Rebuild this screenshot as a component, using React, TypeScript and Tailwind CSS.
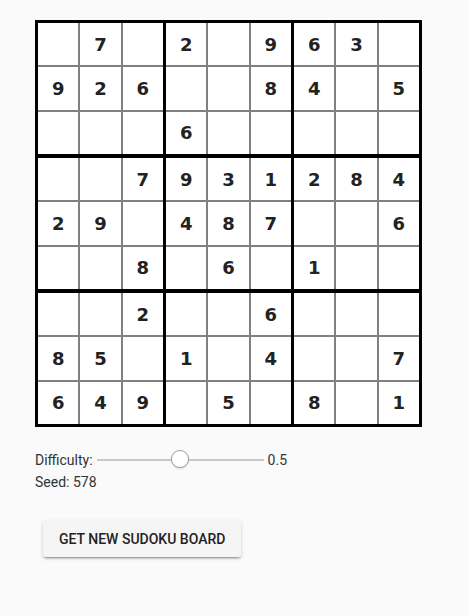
import React from 'react';

const BOARD = [
  '.7.2.963.',
  '926..84.5',
  '...6.....',
  '..7931284',
  '29.487..6',
  '..8.6.1..',
  '..2..6...',
  '85.1.4..7',
  '649.5.8.1',
];

const cellAt = (r: number, c: number) => {
  const ch = BOARD[r][c];
  return ch === '.' ? '' : ch;
};

function Box({ br, bc }: { br: number; bc: number }) {
  const cells = [];
  for (let i = 0; i < 3; i++) {
    for (let j = 0; j < 3; j++) {
      const r = br * 3 + i;
      const c = bc * 3 + j;
      cells.push(
        <div
          key={`${r}-${c}`}
          className="bg-white flex items-center justify-center text-[18px] font-bold text-[#222]"
          style={{ fontFamily: '"DejaVu Sans", Verdana, sans-serif' }}
        >
          {cellAt(r, c)}
        </div>
      );
    }
  }
  return <div className="grid grid-cols-3 grid-rows-3 gap-[2px] bg-[#808080]">{cells}</div>;
}

export default function App() {
  return (
    <div
      className="min-h-screen bg-[#fafafa] pl-[35px] pt-[20px] text-[14px] text-[#333]"
      style={{ fontFamily: 'Roboto, "Liberation Sans", sans-serif' }}
    >
      <div className="w-[387px] h-[407px] border-[3px] border-black bg-black grid grid-cols-3 grid-rows-3 gap-x-[3px] gap-y-[4px]">
        {[0, 1, 2].map(br => [0, 1, 2].map(bc => <Box key={`${br}${bc}`} br={br} bc={bc} />))}
      </div>

      <div className="mt-[23px] h-5 flex items-center">
        <span className="leading-5">Difficulty:</span>
        <div className="relative ml-[4px] w-[167px] h-[18px] flex items-center">
          <div className="w-full h-[2px] bg-[#c8c8c8]" />
          <div className="absolute left-[74px] top-[-1px] w-[18px] h-[18px] rounded-full bg-white border border-[#a0a0a0] shadow-[0_1px_2px_rgba(0,0,0,0.15)]" />
        </div>
        <span className="ml-[4px] leading-5">0.5</span>
      </div>
      <div className="mt-[2px] leading-5">Seed: 578</div>

      <button className="mt-[29px] ml-2 h-9 px-4 bg-[#f5f5f5] rounded-[3px] text-[14px] font-medium text-[#222] uppercase shadow-[0_3px_1px_-2px_rgba(0,0,0,0.2),0_2px_2px_0_rgba(0,0,0,0.14),0_1px_5px_0_rgba(0,0,0,0.12)]">
        Get new sudoku board
      </button>
    </div>
  );
}
